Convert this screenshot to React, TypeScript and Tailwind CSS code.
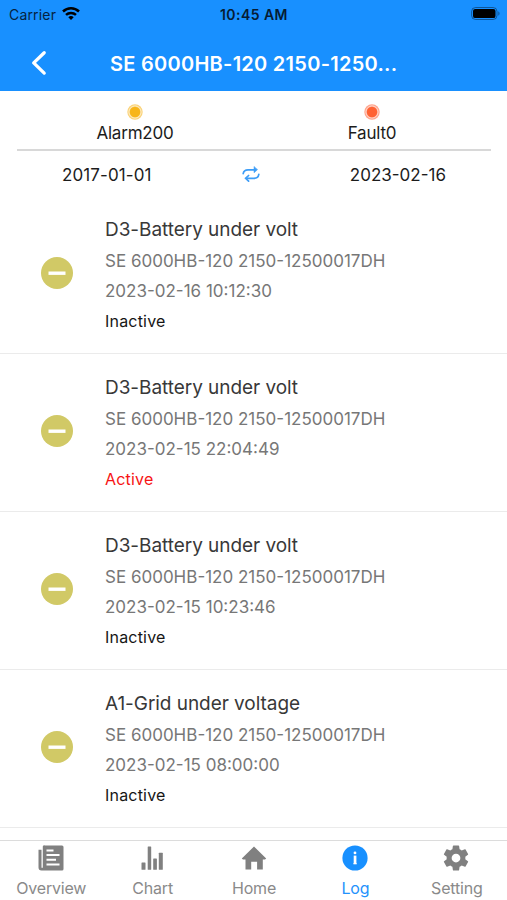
import React from "react";

/* ================= DATA ================= */

type LogEntry = {
  title: string;
  device: string;
  time: string;
  active: boolean;
};

const DEVICE = "SE 6000HB-120 2150-12500017DH";

const LOGS: LogEntry[] = [
  { title: "D3-Battery under volt", device: DEVICE, time: "2023-02-16 10:12:30", active: false },
  { title: "D3-Battery under volt", device: DEVICE, time: "2023-02-15 22:04:49", active: true },
  { title: "D3-Battery under volt", device: DEVICE, time: "2023-02-15 10:23:46", active: false },
  { title: "A1-Grid under voltage", device: DEVICE, time: "2023-02-15 08:00:00", active: false },
];

/* ================= ICONS ================= */

function WifiIcon() {
  return (
    <svg viewBox="0 0 18 14" className="h-[14px] w-[18px]" fill="none" stroke="#000" strokeWidth="2.5">
      <path d="M1 4.500a11.600 11.600 0 0 1 16 0" />
      <path d="M4 7.900a7.300 7.300 0 0 1 10 0" />
      <path d="M9 13.100 6.300 10.300a4 4 0 0 1 5.400 0z" fill="#000" stroke="none" />
    </svg>
  );
}

function BatteryIcon() {
  return (
    <svg viewBox="0 0 30 14" className="h-[14px] w-[30px]">
      <rect x="0.6" y="0.500" width="25.400" height="12" rx="4" fill="none" stroke="#000" strokeOpacity="0.4" />
      <rect x="2" y="1.900" width="22.500" height="9.2" rx="2.2" fill="#000" />
      <path d="M27.300 4.300c1.700.7 1.700 3.7 0 4.4z" fill="#000" fillOpacity="0.4" />
    </svg>
  );
}

function BackIcon() {
  return (
    <svg
      viewBox="0 0 16 26"
      className="h-[26px] w-4"
      fill="none"
      stroke="#fff"
      strokeWidth="3.3"
      strokeLinecap="round"
      strokeLinejoin="round"
    >
      <path d="M13.2 2.7 2.7 12.9l10.5 10.2" />
    </svg>
  );
}

function SwapIcon() {
  return (
    <svg viewBox="0 0 18 16" className="mb-[3px] h-4 w-[18px]" fill="none" stroke="#3d9df7" strokeWidth="1.7" strokeLinecap="round">
      <path d="M1.200 7.600C1.600 5 3.400 3.800 6 3.800h7.500" />
      <path d="M12 .8v6l3.400-3z" fill="#3d9df7" strokeWidth="0.500" />
      <path d="M16.800 8.400c-.4 2.600-2.200 3.900-4.800 3.900H4.500" />
      <path d="M6.600 9.500 3.600 12.300l3 2.900" />
    </svg>
  );
}

function OverviewIcon() {
  return (
    <svg viewBox="0 0 26 26" className="h-[26px] w-[26px]">
      <path d="M7 .5h17A1.500 1.500 0 0 1 25.500 2v22a1.500 1.500 0 0 1-1.500 1.500H3.500A3 3 0 0 1 .5 22.500V4.700h3v18h1.300V2A1.500 1.500 0 0 1 7 .5z" fill="#808080" />
      <path d="M8.500 5.500h7M8.500 10h13M8.500 14.800h9.500M8.500 19.600h13" stroke="#fff" strokeWidth="2" />
    </svg>
  );
}

function ChartIcon() {
  return (
    <svg viewBox="0 0 26 26" className="h-[26px] w-[26px]" fill="#808080">
      <rect x="2.500" y="17.500" width="4" height="7.200" rx="0.500" />
      <rect x="8.700" y="1.500" width="3.500" height="23.200" rx="0.500" />
      <rect x="14.200" y="13.500" width="3.700" height="11.200" rx="0.500" />
      <rect x="19.800" y="7.800" width="4" height="16.900" rx="0.500" />
    </svg>
  );
}

function HomeIcon() {
  return (
    <svg viewBox="0 0 26 26" className="h-[26px] w-[26px]" fill="#808080">
      <path d="M13 1.500 25.200 13.500 24 14.600h-2.200v10h-5.700v-7.800H10.200v7.800H4.500v-10H2L.8 13.500z" />
    </svg>
  );
}

function LogIcon() {
  return (
    <svg viewBox="0 0 26 26" className="h-[26px] w-[26px]">
      <circle cx="13" cy="13" r="12.600" fill="#1890ff" />
      <rect x="11.700" y="10.600" width="2.700" height="8.600" fill="#fff" />
      <rect x="11.100" y="18.200" width="3.900" height="1" fill="#fff" fillOpacity="0.700" />
      <circle cx="13" cy="7.900" r="1.400" fill="#fff" />
    </svg>
  );
}

function SettingIcon() {
  return (
    <svg viewBox="0 0 24 24" className="h-[30px] w-[30px]" fill="#808080">
      <path d="M19.430 12.980c.040-.320.070-.640.070-.980s-.030-.660-.070-.980l2.110-1.650c.190-.150.240-.420.120-.640l-2-3.460c-.120-.220-.390-.300-.610-.220l-2.490 1c-.520-.400-1.080-.730-1.690-.980l-.380-2.650C14.460 2.180 14.250 2 14 2h-4c-.250 0-.460.180-.490.420l-.380 2.650c-.610.250-1.170.590-1.690.980l-2.490-1c-.230-.090-.490 0-.610.220l-2 3.460c-.130.220-.070.490.120.640l2.110 1.650c-.040.320-.070.650-.070.980s.030.660.070.980l-2.110 1.650c-.190.150-.240.420-.120.640l2 3.460c.120.220.390.300.610.220l2.490-1c.520.400 1.080.730 1.690.980l.380 2.650c.030.240.240.420.490.420h4c.250 0 .460-.180.490-.420l.380-2.650c.610-.250 1.170-.590 1.690-.980l2.490 1c.230.090.490 0 .610-.220l2-3.460c.120-.220.070-.490-.120-.640zM12 15.500A3.500 3.500 0 1 1 12 8.500a3.500 3.500 0 0 1 0 7z" />
    </svg>
  );
}

const TABS = [
  { label: "Overview", icon: OverviewIcon },
  { label: "Chart", icon: ChartIcon },
  { label: "Home", icon: HomeIcon },
  { label: "Log", icon: LogIcon, current: true },
  { label: "Setting", icon: SettingIcon },
];

/* ================= PARTS ================= */

function Header() {
  return (
    <header className="h-[91px] shrink-0 bg-[#1890ff]">
      <div className="grid h-7 grid-cols-3 items-center pr-[6px] pl-[9px] text-[14px] text-[#06233f]">
        <div className="flex items-center gap-[6px]">
          <span className="tracking-[0.18px]">Carrier</span>
          <WifiIcon />
        </div>
        <div className="-ml-[2px] text-center text-[14px] font-semibold tracking-[0.45px] text-[#061c33]">10:45 AM</div>
        <div className="flex justify-end">
          <BatteryIcon />
        </div>
      </div>
      <div className="flex h-[70px] items-center pl-[31px]">
        <BackIcon />
        <h1 className="ml-[63px] pt-[2px] text-[20px] font-semibold tracking-[0.27px] whitespace-nowrap text-white">
          SE 6000HB-120 2150-1250...
        </h1>
      </div>
    </header>
  );
}

function Counter({ label, ring, dot }: { label: string; ring: string; dot: string }) {
  return (
    <div className="flex flex-1 flex-col items-center pt-[13px] pr-px">
      <svg viewBox="0 0 16 16" className="h-4 w-4">
        <circle cx="8" cy="8" r="7.700" fill={ring} />
        <circle cx="8" cy="8" r="6.100" fill="none" stroke="#fff" strokeOpacity="0.650" strokeWidth="0.900" />
        <circle cx="8" cy="8" r="5.200" fill={dot} />
      </svg>
      <span className="mt-px text-[17px] leading-6 tracking-[-0.2px] text-[#1c1c1c]">{label}</span>
    </div>
  );
}

function LogRow({ entry }: { entry: LogEntry }) {
  return (
    <li className="flex h-[158px] shrink-0 items-center border-b border-[#ebebeb] pl-[41px]">
      <svg viewBox="0 0 32 32" className="mb-1 h-8 w-8 shrink-0">
        <circle cx="16" cy="16" r="16" fill="#d1c966" />
        <rect x="7.500" y="14.500" width="17" height="3.400" fill="#fff" />
      </svg>
      <div className="ml-8 whitespace-nowrap">
        <div className="text-[19px] leading-8 tracking-[-0.05px] text-[#383838]">{entry.title}</div>
        <div className="text-[17px] leading-[30px] text-[#777]">{entry.device}</div>
        <div className="text-[17px] leading-[30px] text-[#777]">{entry.time}</div>
        {entry.active ? (
          <div className="text-[16px] leading-[30px] tracking-[0.2px] text-[#f71414]">Active</div>
        ) : (
          <div className="text-[16px] leading-[30px] tracking-[0.2px] text-[#161616]">Inactive</div>
        )}
      </div>
    </li>
  );
}

function TabBar() {
  return (
    <nav className="flex h-[60px] shrink-0 border-t border-[#dcdcdc] bg-white">
      {TABS.map(({ label, icon: Icon, current }) => (
        <div key={label} className="flex flex-1 flex-col items-center pt-1">
          <div className="flex h-[26px] items-center">
            <Icon />
          </div>
          <span
            className={
              current
                ? "mt-[7px] pl-px text-[16px] leading-5 tracking-[-0.2px] text-[#2492fc]"
                : "mt-[7px] pl-px text-[16px] leading-5 tracking-[-0.2px] text-[#8a8a8a]"
            }
          >
            {label}
          </span>
        </div>
      ))}
    </nav>
  );
}

/* ================= MAIN COMPONENT ================= */

export default function App() {
  return (
    <div className="flex h-screen w-full flex-col overflow-hidden bg-white font-['Inter','Liberation_Sans',sans-serif]">
      <Header />
      <div className="mr-4 ml-[17px] flex h-[60px] shrink-0 border-b-2 border-[#d8d8d8]">
        <Counter label="Alarm200" ring="#fad277" dot="#f7b519" />
        <Counter label="Fault0" ring="#ffa38a" dot="#ff6233" />
      </div>
      <div className="flex h-[45px] shrink-0 items-center justify-between pt-1 pr-[61px] pl-[62px] text-[17px] text-[#1c1c1c]">
        <span className="tracking-[0.1px]">2017-01-01</span>
        <SwapIcon />
        <span>2023-02-16</span>
      </div>
      <ul className="flex min-h-0 flex-1 flex-col overflow-hidden">
        {LOGS.map((entry) => (
          <LogRow key={entry.time} entry={entry} />
        ))}
      </ul>
      <TabBar />
    </div>
  );
}
